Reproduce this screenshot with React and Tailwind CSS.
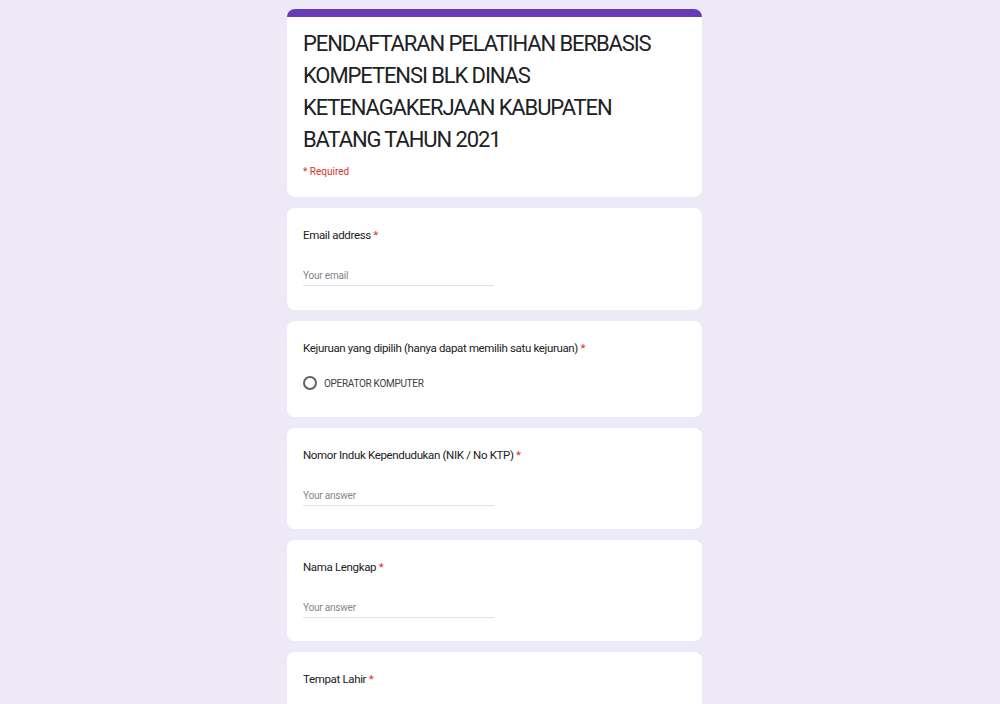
import React from "react";

const font = { fontFamily: "Roboto, 'Liberation Sans', sans-serif" };

const Label = ({ children }) => (
  <div className="text-[11.5px] leading-[16px] text-[#202124] tracking-[-0.03em]">
    {children} <span className="text-[#d93025]">*</span>
  </div>
);

const AnswerInput = ({ placeholder = "Your answer" }) => (
  <div className="w-[191px] h-[18px] border-b border-[#e0e0e6] text-[10px] leading-[16px] text-[#80868b] tracking-[-0.02em]">
    {placeholder}
  </div>
);

const TextQuestion = ({ label, placeholder, tall }) => (
  <div
    className={
      tall
        ? "bg-white rounded-lg px-4 pt-[19px] pb-[24px]"
        : "bg-white rounded-lg px-4 pt-[19px] pb-[23px]"
    }
  >
    <Label>{label}</Label>
    <div className="mt-[25px]">
      <AnswerInput placeholder={placeholder} />
    </div>
  </div>
);

export default function App() {
  return (
    <div className="min-h-screen bg-[#ede9f7] pt-[9px] pb-10" style={font}>
      <div className="ml-[287px] w-[415px] flex flex-col gap-[11px]">
        {/* header */}
        <div className="bg-white rounded-lg overflow-hidden">
          <div className="h-[8px] bg-[#673ab7]" />
          <div className="px-4 pt-[11px] pb-[19px]">
            <h1 className="text-[22px] leading-[32px] text-[#202124] tracking-[-0.05em]">
              PENDAFTARAN PELATIHAN BERBASIS
              <br />
              KOMPETENSI BLK DINAS
              <br />
              KETENAGAKERJAAN KABUPATEN
              <br />
              BATANG TAHUN 2021
            </h1>
            <div className="mt-[10px] text-[10px] leading-[12px] text-[#d93025]">
              * Required
            </div>
          </div>
        </div>

        <TextQuestion label="Email address" placeholder="Your email" tall />

        <div className="bg-white rounded-lg px-4 pt-[19px] pb-[26px]">
          <Label>Kejuruan yang dipilih (hanya dapat memilih satu kejuruan)</Label>
          <div className="mt-[19px] flex items-center gap-[7px] h-[16px]">
            <span className="w-[14px] h-[14px] rounded-full border-2 border-[#5f6368]" />
            <span className="text-[10px] text-[#3c4043] tracking-[-0.03em]">
              OPERATOR KOMPUTER
            </span>
          </div>
        </div>

        <TextQuestion label="Nomor Induk Kependudukan (NIK / No KTP)" />
        <TextQuestion label="Nama Lengkap" />
        <TextQuestion label="Tempat Lahir" />
      </div>
    </div>
  );
}
